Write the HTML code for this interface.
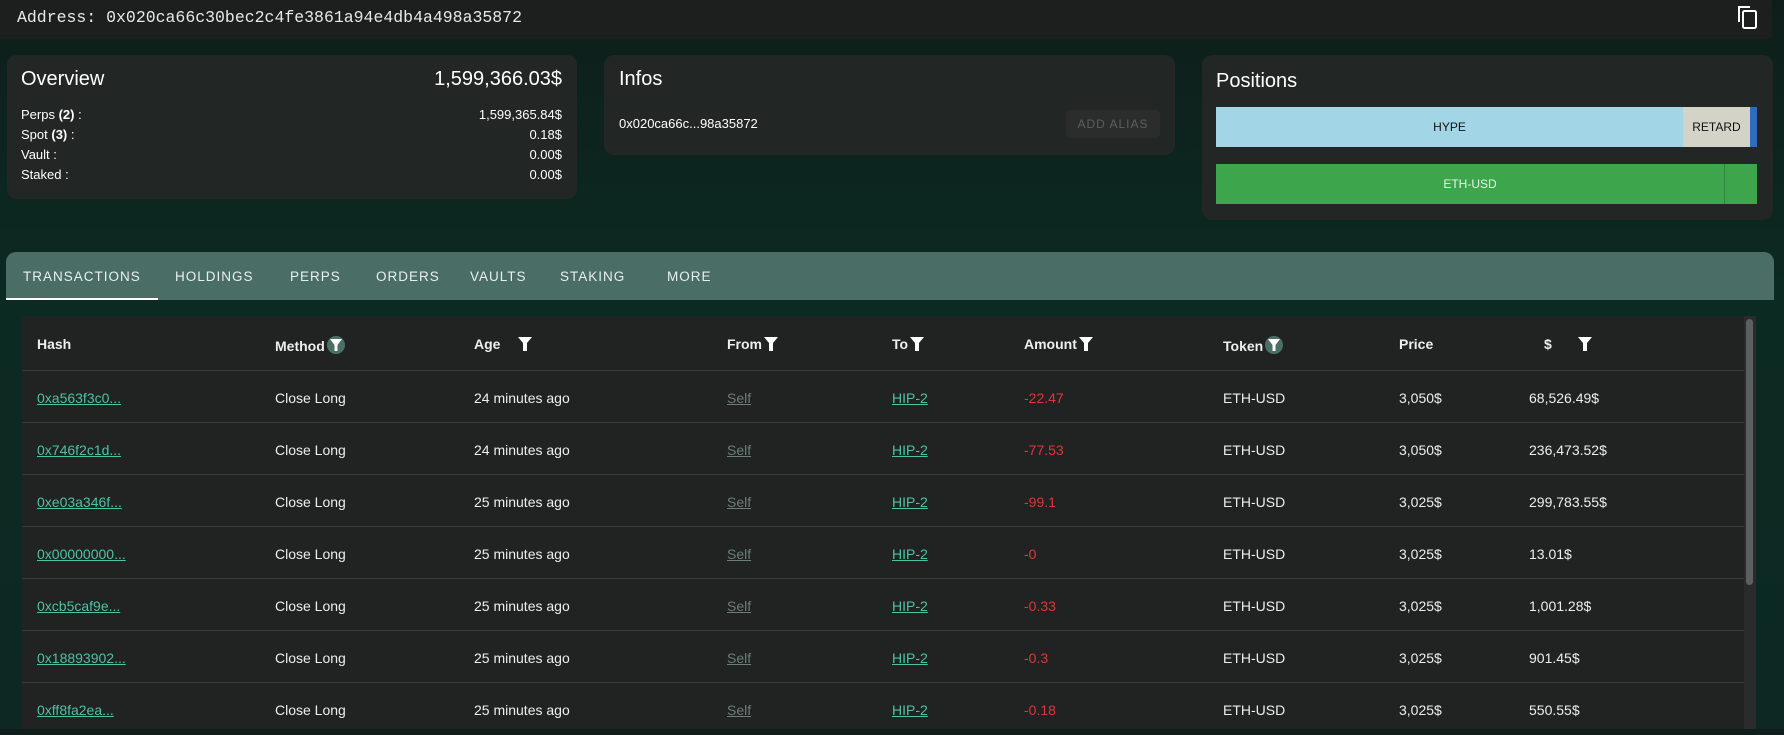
<!DOCTYPE html>
<html><head><meta charset="utf-8"><style>
*{box-sizing:border-box;margin:0;padding:0}
body{width:1784px;height:729px;overflow:hidden;background:linear-gradient(180deg,#0f1e1b 0%,#0b2a22 40%,#0d2823 100%);font-family:"Liberation Sans",sans-serif;color:#fff;position:relative}
.abs{position:absolute}
.top{left:0;top:0;width:1772px;height:39px;background:#1d1e1e;border-radius:0 0 4px 0}
.addr{left:17px;top:8px;font-family:"Liberation Mono",monospace;font-size:16.5px;color:#e8e8e8}
.card{background:#222625;border-radius:10px}
.t20{font-size:20px}
.s13{font-size:13px}
.tabs{left:6px;top:252px;width:1768px;height:48px;background:#4a6e65;border-radius:10px 10px 0 0}
.tab{position:absolute;top:17px;font-size:13.5px;letter-spacing:1px;color:#e8efed;font-weight:500}
.table{left:22px;top:316px;width:1722px;height:413px;background:#212222}
.row{position:absolute;left:0;width:1722px;height:52px;border-bottom:1px solid #3a3c3c}
.c{position:absolute;top:19px;font-size:14px;color:#eee;white-space:nowrap}
.h{font-weight:bold;top:20px}
a{color:#4cc3a3;text-decoration:underline}
.self{color:#6e7e7a}
.red{color:#e2353b}
.f{display:inline-block;vertical-align:-3px;margin-left:2px}
</style></head><body>
<div class="abs top"></div>
<div class="abs addr">Address: 0x020ca66c30bec2c4fe3861a94e4db4a498a35872</div>
<svg class="abs" style="left:1737px;top:5px" width="22" height="24" viewBox="0 0 22 24"><path d="M2 17V2h11" fill="none" stroke="#fff" stroke-width="2"/><rect x="6" y="6" width="13" height="17" rx="1.5" fill="none" stroke="#fff" stroke-width="2"/></svg>

<div class="abs card" style="left:7px;top:55px;width:570px;height:144px"></div>
<div class="abs t20" style="left:21px;top:68px">Overview</div>
<div class="abs t20" style="right:1222px;top:68px">1,599,366.03$</div>
<div class="abs s13" style="left:21px;top:105px;line-height:20px">Perps <b>(2)</b> :<br>Spot <b>(3)</b> :<br>Vault :<br>Staked :</div>
<div class="abs s13" style="right:1222px;top:105px;line-height:20px;text-align:right">1,599,365.84$<br>0.18$<br>0.00$<br>0.00$</div>

<div class="abs card" style="left:604px;top:55px;width:571px;height:100px"></div>
<div class="abs t20" style="left:619px;top:68px">Infos</div>
<div class="abs s13" style="left:619px;top:116px">0x020ca66c...98a35872</div>
<div class="abs" style="left:1066px;top:110px;width:94px;height:28px;background:#2a2d2c;border-radius:4px;color:#5a605e;font-size:12px;letter-spacing:1px;text-align:center;line-height:28px">ADD ALIAS</div>

<div class="abs card" style="left:1202px;top:55px;width:571px;height:165px"></div>
<div class="abs t20" style="left:1216px;top:70px">Positions</div>
<div class="abs" style="left:1216px;top:107px;width:467px;height:40px;background:#a2d5e6;color:#111;font-size:12px;text-align:center;line-height:40px">HYPE</div>
<div class="abs" style="left:1683px;top:107px;width:67px;height:40px;background:#d4d3c8;color:#111;font-size:12px;text-align:center;line-height:40px">RETARD</div>
<div class="abs" style="left:1750px;top:107px;width:7px;height:40px;background:#2d6cc0"></div>
<div class="abs" style="left:1216px;top:164px;width:541px;height:40px;background:#3da64c;color:#e8f5e8;font-size:12px;line-height:40px"><span style="position:absolute;left:0;width:508px;text-align:center">ETH-USD</span><span style="position:absolute;left:508px;top:0;width:1px;height:40px;background:#2e8a3c"></span></div>

<div class="abs tabs">
<div class="tab" style="left:17px">TRANSACTIONS</div>
<div class="tab" style="left:169px">HOLDINGS</div>
<div class="tab" style="left:284px">PERPS</div>
<div class="tab" style="left:370px">ORDERS</div>
<div class="tab" style="left:464px">VAULTS</div>
<div class="tab" style="left:554px">STAKING</div>
<div class="tab" style="left:661px">MORE</div>
<div style="position:absolute;left:0;bottom:0;width:152px;height:2px;background:#fff"></div>
</div>

<div class="abs table">
<div class="row" style="top:0;height:55px">
<div class="c h" style="left:15px">Hash</div>
<div class="c h" style="left:253px">Method<svg class="f" width="18" height="18" viewBox="0 0 18 18"><circle cx="9" cy="9" r="9" fill="#4a7066"/><path d="M3 3h12l-4.5 6v6h-3V9z" fill="#fff"/></svg></div>
<div class="c h" style="left:452px">Age <svg class="f" style="margin-left:14px" width="14" height="16" viewBox="0 0 14 16"><path d="M0 1h14l-5 6v8H5V7z" fill="#fff"/></svg></div>
<div class="c h" style="left:705px">From<svg class="f" width="14" height="16" viewBox="0 0 14 16"><path d="M0 1h14l-5 6v8H5V7z" fill="#fff"/></svg></div>
<div class="c h" style="left:870px">To<svg class="f" width="14" height="16" viewBox="0 0 14 16"><path d="M0 1h14l-5 6v8H5V7z" fill="#fff"/></svg></div>
<div class="c h" style="left:1002px">Amount<svg class="f" width="14" height="16" viewBox="0 0 14 16"><path d="M0 1h14l-5 6v8H5V7z" fill="#fff"/></svg></div>
<div class="c h" style="left:1201px">Token<svg class="f" width="18" height="18" viewBox="0 0 18 18"><circle cx="9" cy="9" r="9" fill="#4a7066"/><path d="M3 3h12l-4.5 6v6h-3V9z" fill="#fff"/></svg></div>
<div class="c h" style="left:1377px">Price</div>
<div class="c h" style="left:1522px">$ <svg class="f" style="margin-left:22px" width="14" height="16" viewBox="0 0 14 16"><path d="M0 1h14l-5 6v8H5V7z" fill="#fff"/></svg></div>
</div>
<div class="row" style="top:55px"><div class="c" style="left:15px"><a>0xa563f3c0...</a></div><div class="c" style="left:253px">Close Long</div><div class="c" style="left:452px">24 minutes ago</div><div class="c" style="left:705px"><a class="self">Self</a></div><div class="c" style="left:870px"><a>HIP-2</a></div><div class="c red" style="left:1002px">-22.47</div><div class="c" style="left:1201px">ETH-USD</div><div class="c" style="left:1377px">3,050$</div><div class="c" style="left:1507px">68,526.49$</div></div>
<div class="row" style="top:107px"><div class="c" style="left:15px"><a>0x746f2c1d...</a></div><div class="c" style="left:253px">Close Long</div><div class="c" style="left:452px">24 minutes ago</div><div class="c" style="left:705px"><a class="self">Self</a></div><div class="c" style="left:870px"><a>HIP-2</a></div><div class="c red" style="left:1002px">-77.53</div><div class="c" style="left:1201px">ETH-USD</div><div class="c" style="left:1377px">3,050$</div><div class="c" style="left:1507px">236,473.52$</div></div>
<div class="row" style="top:159px"><div class="c" style="left:15px"><a>0xe03a346f...</a></div><div class="c" style="left:253px">Close Long</div><div class="c" style="left:452px">25 minutes ago</div><div class="c" style="left:705px"><a class="self">Self</a></div><div class="c" style="left:870px"><a>HIP-2</a></div><div class="c red" style="left:1002px">-99.1</div><div class="c" style="left:1201px">ETH-USD</div><div class="c" style="left:1377px">3,025$</div><div class="c" style="left:1507px">299,783.55$</div></div>
<div class="row" style="top:211px"><div class="c" style="left:15px"><a>0x00000000...</a></div><div class="c" style="left:253px">Close Long</div><div class="c" style="left:452px">25 minutes ago</div><div class="c" style="left:705px"><a class="self">Self</a></div><div class="c" style="left:870px"><a>HIP-2</a></div><div class="c red" style="left:1002px">-0</div><div class="c" style="left:1201px">ETH-USD</div><div class="c" style="left:1377px">3,025$</div><div class="c" style="left:1507px">13.01$</div></div>
<div class="row" style="top:263px"><div class="c" style="left:15px"><a>0xcb5caf9e...</a></div><div class="c" style="left:253px">Close Long</div><div class="c" style="left:452px">25 minutes ago</div><div class="c" style="left:705px"><a class="self">Self</a></div><div class="c" style="left:870px"><a>HIP-2</a></div><div class="c red" style="left:1002px">-0.33</div><div class="c" style="left:1201px">ETH-USD</div><div class="c" style="left:1377px">3,025$</div><div class="c" style="left:1507px">1,001.28$</div></div>
<div class="row" style="top:315px"><div class="c" style="left:15px"><a>0x18893902...</a></div><div class="c" style="left:253px">Close Long</div><div class="c" style="left:452px">25 minutes ago</div><div class="c" style="left:705px"><a class="self">Self</a></div><div class="c" style="left:870px"><a>HIP-2</a></div><div class="c red" style="left:1002px">-0.3</div><div class="c" style="left:1201px">ETH-USD</div><div class="c" style="left:1377px">3,025$</div><div class="c" style="left:1507px">901.45$</div></div>
<div class="row" style="top:367px;border:none"><div class="c" style="left:15px"><a>0xff8fa2ea...</a></div><div class="c" style="left:253px">Close Long</div><div class="c" style="left:452px">25 minutes ago</div><div class="c" style="left:705px"><a class="self">Self</a></div><div class="c" style="left:870px"><a>HIP-2</a></div><div class="c red" style="left:1002px">-0.18</div><div class="c" style="left:1201px">ETH-USD</div><div class="c" style="left:1377px">3,025$</div><div class="c" style="left:1507px">550.55$</div></div>
</div>
<div class="abs" style="left:1744px;top:316px;width:12px;height:413px;background:#2a2c2c"></div>
<div class="abs" style="left:1746px;top:319px;width:7px;height:266px;background:#5c5f5f;border-radius:4px"></div>
</body></html>
